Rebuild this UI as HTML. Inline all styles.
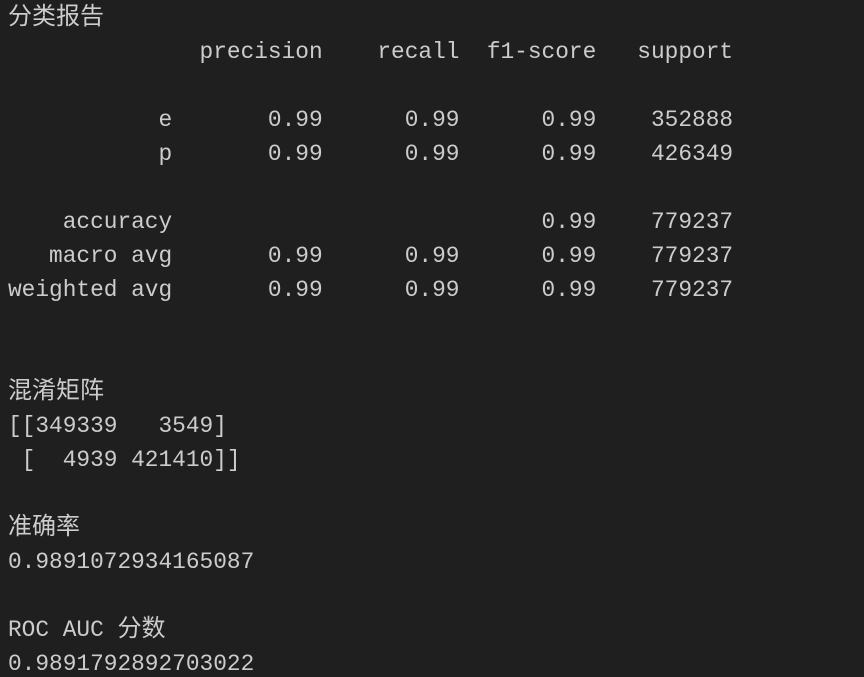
<!DOCTYPE html>
<html><head><meta charset="utf-8"><style>
html,body{margin:0;padding:0;background:#1f1f1f;width:864px;height:677px;overflow:hidden}
.w{padding:1px 0 0 8px;font-family:"Liberation Mono","Noto Sans CJK SC",monospace;font-size:22.8px;color:#cccccc}
.w div{height:34px;line-height:34px;white-space:pre}
.c{font-size:24px;line-height:34px}
</style></head><body><div class="w">
<div><span class="c">分类报告</span></div>
<div>              precision    recall  f1-score   support</div>
<div></div>
<div>           e       0.99      0.99      0.99    352888</div>
<div>           p       0.99      0.99      0.99    426349</div>
<div></div>
<div>    accuracy                           0.99    779237</div>
<div>   macro avg       0.99      0.99      0.99    779237</div>
<div>weighted avg       0.99      0.99      0.99    779237</div>
<div></div>
<div></div>
<div><span class="c">混淆矩阵</span></div>
<div>[[349339   3549]</div>
<div> [  4939 421410]]</div>
<div></div>
<div><span class="c">准确率</span></div>
<div>0.9891072934165087</div>
<div></div>
<div>ROC AUC <span class="c">分数</span></div>
<div>0.9891792892703022</div>
</div></body></html>
